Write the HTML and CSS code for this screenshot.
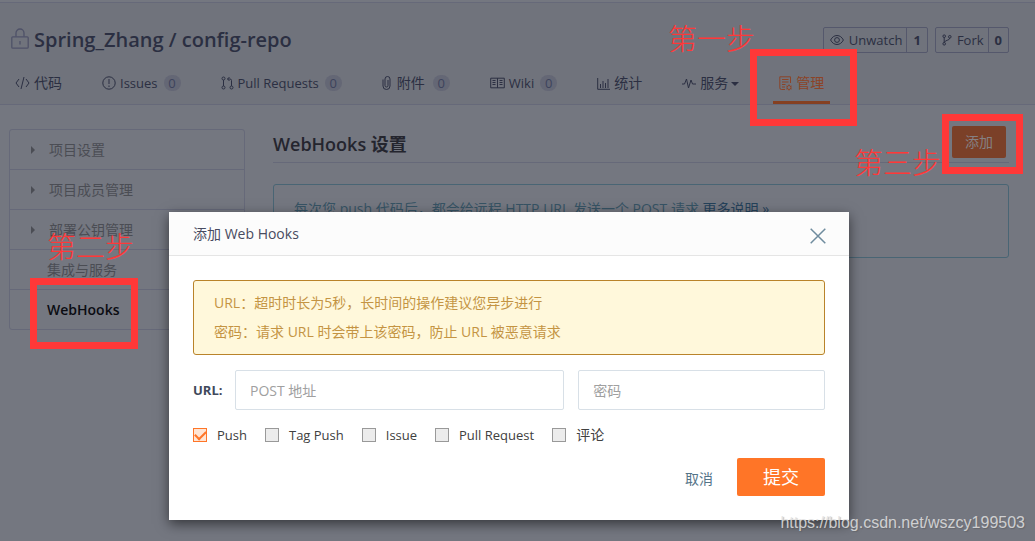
FILE: index.html
```html
<!DOCTYPE html>
<html lang="zh-CN">
<head>
<meta charset="utf-8">
<meta name="viewport" content="width=device-width, initial-scale=1">
<title>WebHooks 设置</title>
<link rel="stylesheet" href="styles.css">
</head>
<body>
<header class="repo-header">
  <div class="repo-top">
    <h1 class="repo-title">
      <svg class="lock" viewBox="0 0 18 21" width="18" height="21"><rect x=".8" y="8.8" width="16.4" height="11.4" rx="1"/><path d="M5 8.500V5a4 4 0 0 1 8 0v3.500M9 13v3.500"/></svg>
      <span>Spring_Zhang / config-repo</span>
    </h1>
    <div class="repo-actions">
      <div class="action"><button type="button" class="action-main"><svg viewBox="0 0 14 12" width="14" height="12"><path d="M.6 6C2 3.200 4.300 1.500 7 1.500S12 3.200 13.400 6C12 8.800 9.700 10.500 7 10.500S2 8.800.6 6Z"/><circle cx="7" cy="6" r="2.400"/></svg>Unwatch</button><a class="action-count" href="#">1</a></div>
      <div class="action"><button type="button" class="action-main"><svg viewBox="0 0 10 12" width="10" height="12"><circle cx="2.200" cy="2.200" r="1.300"/><circle cx="2.200" cy="9.800" r="1.300"/><circle cx="7.800" cy="2.800" r="1.300"/><path d="M2.200 3.500v5M7.800 4.100C7.500 6.800 3 5.800 2.200 8.500"/></svg>Fork</button><a class="action-count" href="#">0</a></div>
    </div>
  </div>
  <nav class="tabs">
    <a class="tab" href="#"><svg viewBox="0 0 15 14" width="15" height="14"><path d="M4 3 1 7l3 4M11 3l3 4-3 4M9 1 6 13"/></svg><span>代码</span></a>
    <a class="tab latin" href="#"><svg viewBox="0 0 14 14" width="14" height="14"><circle cx="7" cy="7" r="6.200"/><path d="M7 3v5M7 9.500V11"/></svg><span>Issues</span><span class="badge">0</span></a>
    <a class="tab latin" href="#"><svg viewBox="0 0 13 14" width="13" height="14"><circle cx="2.500" cy="2.500" r="1.500"/><circle cx="2.500" cy="11.500" r="1.500"/><circle cx="10.500" cy="11.500" r="1.500"/><path d="M2.500 4v6M10.500 10V4.500q0-1.500-1.500-1.500H6.500M8.500 1l-2 2 2 2"/></svg><span>Pull Requests</span><span class="badge">0</span></a>
    <a class="tab clip" href="#"><svg viewBox="0 0 9 14" width="9" height="14"><path d="M1 3.500V10a3.500 3.500 0 0 0 7 0V3a2.500 2.500 0 0 0-5 0v6.500a1.500 1.500 0 0 0 3 0V4"/></svg><span>附件</span><span class="badge">0</span></a>
    <a class="tab latin" href="#"><svg viewBox="0 0 15 12" width="15" height="12"><path d="M.7 1.200h13.600v9.600H.7ZM7.500 1.200v9.600M2.500 3.500h3M2.500 5.500h3M2.500 7.500h3M9.500 3.500h3M9.500 5.500h3M9.500 7.500h3"/></svg><span>Wiki</span><span class="badge">0</span></a>
    <a class="tab" href="#"><svg viewBox="0 0 13 13" width="13" height="13"><path d="M.7 1v11.300H13M3.500 11V7M6 11V4M8.500 11V6M11 11V2"/></svg><span>统计</span></a>
    <a class="tab" href="#"><svg viewBox="0 0 14 12" width="14" height="12"><path d="M0 7h2.500l2-5 2 9 2.500-8 1.500 4H14"/></svg><span>服务<i class="caret"></i></span></a>
    <a class="tab active" href="#"><svg viewBox="0 0 13 15" width="13" height="15"><path d="M6 13.500H2.500q-1.700 0-1.700-1.700V.8h10.700V7M3 3.500h6.500M3 6h6.500M3 8.500h3.500M3 11h3"/><circle cx="10" cy="11.500" r="2"/><path d="M10 8.500v1M10 13.500v1M7.400 10l.9.500M11.700 12.500l.9.500M12.600 10l-.9.500M8.300 12.500l-.9.500"/></svg><span>管理</span></a>
  </nav>
</header>
<div class="content">
  <nav class="sidebar">
    <a href="#"><i class="arrow"></i>项目设置</a>
    <a href="#"><i class="arrow"></i>项目成员管理</a>
    <a href="#"><i class="arrow"></i>部署公钥管理</a>
    <a href="#" class="plain">集成与服务</a>
    <a href="#" class="plain current">WebHooks</a>
  </nav>
  <main class="main">
    <div class="main-head"><h2>WebHooks 设置</h2><button type="button" class="add">添加</button></div>
    <div class="info">每次您 push 代码后<span class="stop">，</span>都会给远程 HTTP URL 发送一个 POST 请求 <a href="#">更多说明 »</a></div>
  </main>
</div>

<div class="overlay">
  <form class="modal" role="dialog" aria-labelledby="dialog-title">
    <div class="modal-head">
      <h3 id="dialog-title">添加 Web Hooks</h3>
      <button type="button" class="close" aria-label="关闭"><svg viewBox="0 0 16 16" width="16" height="16"><path d="M.7.7l14.600 14.600M15.300.7.7 15.300"/></svg></button>
    </div>
    <div class="modal-body">
      <div class="warning"><p>URL<span class="stop">：</span>超时时长为5秒<span class="stop">，</span>长时间的操作建议您异步进行</p><p>密码<span class="stop">：</span>请求 URL 时会带上该密码<span class="stop">，</span>防止 URL 被恶意请求</p></div>
      <div class="fields">
        <label for="url">URL:</label>
        <input id="url" type="text" placeholder="POST 地址">
        <input type="text" placeholder="密码" aria-label="密码">
      </div>
      <div class="checks">
        <label><input type="checkbox" checked>Push</label>
        <label><input type="checkbox">Tag Push</label>
        <label><input type="checkbox">Issue</label>
        <label><input type="checkbox">Pull Request</label>
        <label class="cjk"><input type="checkbox">评论</label>
      </div>
      <div class="buttons"><button type="button" class="cancel">取消</button><button type="submit" class="submit">提交</button></div>
    </div>
  </form>
</div>

<div class="mark mark-one"></div><div class="note note-one">第一步</div>
<div class="mark mark-two"></div><div class="note note-two">第二步</div>
<div class="mark mark-three"></div><div class="note note-three">第三步</div>
<div class="watermark">https://blog.csdn.net/wszcy199503</div>
</body>
</html>
```
FILE: styles.css
```css
* { box-sizing: border-box; }
body {
  margin: 0;
  min-height: 100vh;
  position: relative;
  overflow: hidden;
  background: #747780;
  color: #2b2f42;
  font: 14px/20px "Open Sans", "Noto Sans CJK SC", sans-serif;
}
h1, h2, h3, p { margin: 0; }
a { color: inherit; text-decoration: none; }
button, input { font: inherit; color: inherit; margin: 0; }
button { background: none; border: 0; padding: 0; cursor: pointer; }
svg { fill: none; stroke: currentColor; stroke-width: 1; flex: none; }
.stop { font-family: "Noto Sans CJK TC", sans-serif; }

.repo-header {
  margin-top: 2px;
  border-top: 1px solid #666979;
  border-bottom: 1px solid #666979;
  background: #70737c;
}
.repo-top {
  display: flex;
  justify-content: space-between;
  align-items: center;
  padding: 22px 26px 0 11px;
}
.repo-title { display: flex; align-items: center; gap: 5px; font-size: 20px; line-height: 30px; font-weight: 600; }
.lock { color: #4f5268; stroke-width: 1.3; margin-bottom: 3px; }
.repo-actions { display: flex; gap: 7px; }
.action { display: flex; height: 26px; border: 1px solid #55586c; border-radius: 2px; }
.action-main { display: flex; align-items: center; gap: 5px; padding: 0 4px 0 6px; font-size: 13px; }
.action-count { border-left: 1px solid #55586c; padding: 0 6px; line-height: 24px; font-weight: 700; font-size: 13px; }

.tabs { display: flex; gap: 28px; padding: 6px 9px 0; }
.tab { display: flex; align-items: center; gap: 4px; height: 43px; padding: 4px 6px 0; border-bottom: 3px solid transparent; white-space: nowrap; }
.latin { font-size: 13px; }
.clip { gap: 6px; }
.badge { min-width: 17px; height: 16px; border-radius: 8px; background: #646775; color: #3d435c; font-size: 13px; line-height: 16px; text-align: center; margin-left: 2px; }
.caret { display: inline-block; border: 4px solid transparent; border-top-color: currentColor; border-bottom: 0; vertical-align: middle; margin-left: 3px; }
.active { color: #8c4427; border-bottom-color: #854021; }

.content { display: flex; gap: 28px; padding: 21px 26px 0 9px; align-items: flex-start; }
.sidebar { width: 236px; flex: none; margin-top: 3px; border: 1px solid #666979; border-radius: 3px; color: #4b4d54; }
.sidebar a { display: flex; align-items: center; height: 40px; padding-left: 21px; }
.sidebar a:first-child { height: 39px; }
.sidebar a + a { border-top: 1px solid #666979; }
.sidebar .plain { padding-left: 37px; }
.sidebar .current { color: #0b0c12; font-weight: 600; }
.arrow { border: 4px solid transparent; border-left-color: currentColor; border-right: 0; margin-right: 14px; }
.main { flex: 1; min-width: 0; }
.main-head { display: flex; justify-content: space-between; height: 37px; padding-right: 3px; border-bottom: 1px solid #666979; }
.main-head h2 { font-size: 18px; line-height: 36px; font-weight: 600; color: #24252e; }
.add { width: 54px; height: 32px; background: #7b4028; color: #858084; border-radius: 2px; }
.info { margin-top: 21px; min-height: 74px; padding: 13px 20px; border: 1px solid #496574; border-radius: 3px; color: #365364; }
.info a { color: #24415a; }

.overlay { position: absolute; inset: 0; display: flex; justify-content: center; align-items: flex-start; padding: 212px 17px 0 0; }
.modal { width: 680px; background: #fff; box-shadow: 0 4px 12px rgba(0, 0, 0, .55); }
.modal-head { display: flex; justify-content: space-between; align-items: center; height: 44px; padding: 0 23px 0 24px; background: #fcfcfc; border-bottom: 1px solid #e5e5e5; }
.modal-head h3 { font-weight: 400; font-size: 14px; color: #484b60; }
.close { color: #6f8c9e; line-height: 0; margin-top: 4px; }
.close svg { stroke-width: 1.500; }
.modal-body { padding: 24px; }
.warning { padding: 7px 20px 8px; border: 1px solid #b9832a; border-radius: 3px; background: #fff8db; color: #c49443; line-height: 29px; }
.fields { display: grid; grid-template-columns: 28px 4fr 3fr; gap: 14px; align-items: center; margin-top: 15px; }
.fields label { font-size: 13px; font-weight: 700; color: #40485b; }
.fields input { width: 100%; min-width: 0; height: 40px; padding: 0 14px; border: 1px solid #d8e0e7; border-radius: 2px; background: #fff; }
.fields input::placeholder { color: #a0a0a0; opacity: 1; }
.checks { display: flex; gap: 18px; margin-top: 15px; font-size: 13px; color: #404040; }
.checks label { display: flex; align-items: center; gap: 10px; }
.checks .cjk { font-size: 14px; }
.checks input { appearance: none; width: 14px; height: 14px; border: 1px solid #999; background: #ececec; }
.checks input:checked { border-color: #ff7527; background: #ffe5d4; display: grid; place-items: center; }
.checks input:checked::before { content: ""; width: 9px; height: 5px; border: solid #ff7527; border-width: 0 0 2px 2px; transform: rotate(-45deg) translate(1px, -1px); }
.buttons { display: flex; justify-content: flex-end; align-items: center; gap: 24px; margin-top: 13px; }
.cancel { color: #547488; margin-top: 4px; }
.submit { width: 88px; height: 38px; border-radius: 2px; background: #ff7527; color: #fff; font-size: 18px; }

.mark { position: absolute; border: 7px solid #ff3838; pointer-events: none; }
.mark-one { left: 750px; top: 49px; width: 107px; height: 77px; }
.mark-two { left: 30px; top: 278px; width: 108px; height: 71px; }
.mark-three { left: 942px; top: 114px; width: 81px; height: 60px; }
.note { position: absolute; color: #ff3838; font: 200 29px/32px "Noto Sans CJK SC", sans-serif; pointer-events: none; }
.note-one { left: 668px; top: 21px; }
.note-two { left: 47px; top: 229px; }
.note-three { left: 854px; top: 145px; }
.watermark { position: absolute; right: 10px; bottom: 8px; color: rgba(226, 226, 226, .85); font: 16px/20px "Liberation Sans", sans-serif; text-shadow: 1px 1px 1px rgba(80, 80, 80, .4); }
```
